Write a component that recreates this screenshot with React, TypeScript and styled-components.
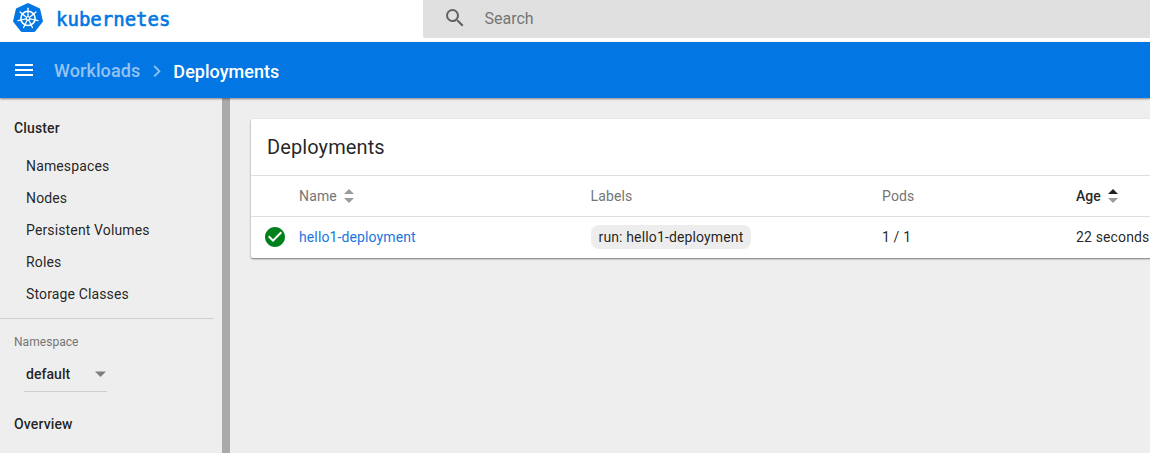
import React from "react";
import styled, { createGlobalStyle } from "styled-components";

const GlobalStyle = createGlobalStyle`
  * { box-sizing: border-box; }
  body {
    margin: 0;
    overflow: hidden;
    background: #eee;
    color: rgba(0, 0, 0, 0.87);
    font-family: Roboto, "Liberation Sans", sans-serif;
    font-size: 14px;
    letter-spacing: 0.14px;
  }
`;

const Page = styled.div`
  display: flex;
  flex-direction: column;
  height: 453px;
  overflow: hidden;
`;

const TopBar = styled.header`
  display: flex;
  flex: none;
  height: 42px;
  background: #fff;
`;

const Brand = styled.div`
  display: flex;
  align-items: flex-start;
  width: 423px;
  padding: 2px 0 0 12px;
`;

const BrandName = styled.span`
  margin: 5px 0 0 12px;
  color: #0277e3;
  font: 400 19px/24px "DejaVu Sans Mono", monospace;
  letter-spacing: 0;
  -webkit-text-stroke: 0.6px #0277e3;
`;

const SearchBox = styled.div`
  display: flex;
  flex: 1;
  align-items: center;
  height: 38px;
  padding: 0 0 1px 19.5px;
  gap: 18px;
  background: #e0e0e0;
  border-radius: 0 0 0 2px;
  color: #757575;
  font-size: 16px;
  letter-spacing: 0;

  svg {
    margin-bottom: 2px;
  }
`;

const ActionBar = styled.nav`
  position: relative;
  z-index: 1;
  display: flex;
  flex: none;
  align-items: center;
  height: 56px;
  padding-left: 12px;
  background: #0277e3;
  box-shadow: 0 1px 2px rgba(0, 0, 0, 0.45);
  color: #fff;
  font-size: 18px;
  font-weight: 500;
`;

const CrumbLink = styled.a`
  margin: 0 11px 0 18px;
  color: #94c3f3;
  letter-spacing: 0.1px;
`;

const CrumbCurrent = styled.span`
  margin: 2px 0 0 11px;
  letter-spacing: 0.04px;
`;

const Body = styled.div`
  display: flex;
  flex: 1;
  min-height: 0;
`;

const Sidebar = styled.aside`
  flex: none;
  width: 230px;
  padding: 14px 8px 0 0;
  border-right: 8px solid #a9a9a9;
  overflow: hidden;
`;

const Heading = styled.div`
  height: 32px;
  padding-left: 14px;
  font-weight: 500;
  line-height: 32px;
`;

const NavList = styled.div`
  padding: 6px 0 8px 26px;
  border-bottom: 1px solid #cfcfcf;
`;

const NavItem = styled.div`
  height: 32px;
  line-height: 32px;
  letter-spacing: 0.14px;
`;

const FieldLabel = styled.div`
  padding: 15px 0 0 14px;
  color: #757575;
  font-size: 12px;
  line-height: 16px;
  letter-spacing: 0.05px;
`;

const Select = styled.div`
  display: flex;
  align-items: center;
  justify-content: space-between;
  width: 83px;
  height: 34px;
  margin: 8px 0 16px 24px;
  padding: 0 1px 1px 2px;
  border-bottom: 1px solid #cfcfcf;
  font-weight: 500;
  letter-spacing: 0.05px;
`;

const Content = styled.main`
  flex: none;
  width: 1000px;
  padding: 21px 0 0 21px;
`;

const Card = styled.section`
  height: 139px;
  background: #fff;
  border-radius: 2px;
  box-shadow: 0 1px 2px rgba(0, 0, 0, 0.5);
`;

const CardTitle = styled.h1`
  height: 56px;
  margin: 0;
  padding-left: 16px;
  font-size: 20px;
  font-weight: 400;
  line-height: 56px;
  letter-spacing: 0.1px;
`;

const Row = styled.div<{ $head?: boolean }>`
  display: grid;
  grid-template-columns: 48px 291.5px 291.5px 194px 1fr;
  align-items: center;
  height: 41px;
  border-top: 1px solid #dedede;
  color: ${(p) => (p.$head ? "#757575" : "rgba(0, 0, 0, 0.87)")};
  letter-spacing: 0.14px;
  white-space: nowrap;
`;

const Cell = styled.div<{ $active?: boolean }>`
  display: flex;
  align-items: center;
  gap: 7px;
  ${(p) => p.$active && "color: rgba(0,0,0,0.87); font-weight: 500; letter-spacing: 0;"}
`;

const StatusCell = styled.div`
  display: flex;
  padding-left: 12px;
`;

const NameLink = styled.a`
  color: #1976e0;
  letter-spacing: 0.12px;
`;

const Chip = styled.span`
  height: 24px;
  padding: 0 8px;
  border-radius: 8px;
  background: #ededed;
  line-height: 24px;
  letter-spacing: 0.14px;
`;

const spokes = Array.from({ length: 7 }, (_, i) => (i * 360) / 7);

const KubeLogo = () => (
  <svg width="32" height="32" viewBox="-16 -16 32 32">
    <path
      d="M0-13.7 L10.9-8.5 L13.6 3.3 L6.1 12.8 L-6.1 12.8 L-13.6 3.3 L-10.9-8.5Z"
      fill="#0277e3"
      stroke="#0277e3"
      strokeWidth="2.6"
      strokeLinejoin="round"
    />
    <g fill="none" stroke="#fff" strokeLinecap="round" transform="translate(0 0.4)">
      <circle r="7.1" strokeWidth="1.6" />
      {spokes.map((a) => (
        <path key={a} d="M0-2V-10.2" strokeWidth="1.3" transform={`rotate(${a})`} />
      ))}
      <circle r="1.7" strokeWidth="1.1" />
    </g>
  </svg>
);

const SortIcon = ({ up = "#9b9b9b" }: { up?: string }) => (
  <svg width="10" height="14" viewBox="0 0 10 14">
    <path d="M0 5L5 0L10 5Z" fill={up} />
    <path d="M0 9H10L5 14Z" fill="#9b9b9b" />
  </svg>
);

const resources = ["Namespaces", "Nodes", "Persistent Volumes", "Roles", "Storage Classes"];

export default function App() {
  return (
    <Page>
      <GlobalStyle />
      <TopBar>
        <Brand>
          <KubeLogo />
          <BrandName>kubernetes</BrandName>
        </Brand>
        <SearchBox>
          <svg width="24" height="24" viewBox="0 0 24 24" fill="#616161">
            <path d="M15.5 14h-.79l-.28-.27A6.47 6.47 0 0 0 16 9.5 6.5 6.5 0 1 0 9.5 16c1.61 0 3.09-.59 4.23-1.57l.27.28v.79l5 4.99L20.49 19l-4.99-5zm-6 0C7.01 14 5 11.99 5 9.5S7.01 5 9.5 5 14 7.01 14 9.5 11.99 14 9.5 14z" />
          </svg>
          <span>Search</span>
        </SearchBox>
      </TopBar>
      <ActionBar>
        <svg width="24" height="24" viewBox="0 0 24 24" fill="#fff">
          <path d="M3 18h18v-2H3v2zm0-5h18v-2H3v2zm0-7v2h18V6H3z" />
        </svg>
        <CrumbLink>Workloads</CrumbLink>
        <svg width="11" height="14" viewBox="0 0 11 14">
          <path d="M3.2 3L8.4 8.2L3.2 13.4" fill="none" stroke="#94c3f3" strokeWidth="1.8" />
        </svg>
        <CrumbCurrent>Deployments</CrumbCurrent>
      </ActionBar>
      <Body>
        <Sidebar>
          <Heading>Cluster</Heading>
          <NavList>
            {resources.map((r) => (
              <NavItem key={r}>{r}</NavItem>
            ))}
          </NavList>
          <FieldLabel>Namespace</FieldLabel>
          <Select>
            <span>default</span>
            <svg width="11" height="6" viewBox="0 0 11 6">
              <path d="M0 0.5H11L5.5 6Z" fill="#7f7f7f" />
            </svg>
          </Select>
          <Heading>Overview</Heading>
        </Sidebar>
        <Content>
          <Card>
            <CardTitle>Deployments</CardTitle>
            <Row $head>
              <span />
              <Cell>
                Name <SortIcon />
              </Cell>
              <Cell>Labels</Cell>
              <Cell>Pods</Cell>
              <Cell $active>
                Age <SortIcon up="#212121" />
              </Cell>
            </Row>
            <Row>
              <StatusCell>
                <svg width="24" height="24" viewBox="0 0 24 24" fill="#00801c">
                  <path d="M12 2C6.48 2 2 6.48 2 12s4.48 10 10 10 10-4.48 10-10S17.52 2 12 2zm-2 15l-5-5 1.41-1.41L10 14.17l7.59-7.59L19 8l-9 9z" />
                </svg>
              </StatusCell>
              <Cell>
                <NameLink>hello1-deployment</NameLink>
              </Cell>
              <Cell>
                <Chip>run: hello1-deployment</Chip>
              </Cell>
              <Cell>1 / 1</Cell>
              <Cell>22 seconds</Cell>
            </Row>
          </Card>
        </Content>
      </Body>
    </Page>
  );
}
